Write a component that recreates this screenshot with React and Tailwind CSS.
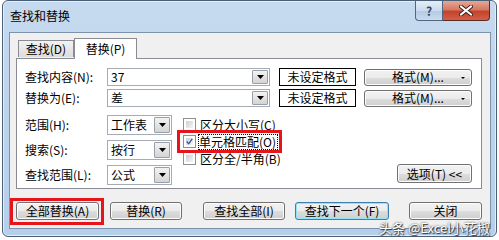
import React from "react";

function Arrow() {
  return (
    <svg width="7" height="4" viewBox="0 0 7 4">
      <path d="M0 0h7L3.5 4z" fill="#000" />
    </svg>
  );
}

function DropBtn() {
  return (
    <div className="w-[16px] h-full border border-[#9aa0a8] rounded-[1px] bg-gradient-to-b from-[#f3f3f3] to-[#d4d4d4] flex items-center justify-center shrink-0">
      <Arrow />
    </div>
  );
}

function Combo({ value, w, h }) {
  return (
    <div className={`${w} ${h} border border-[#a5acb5] bg-white flex items-stretch p-[1px]`}>
      <div className="flex-1 pl-[2px] flex items-center leading-none">{value}</div>
      <DropBtn />
    </div>
  );
}

function Btn({ children, className = "", def = false }) {
  return (
    <div
      className={`${className} rounded-[3px] border ${
        def ? "border-[#3c7fb1] shadow-[inset_0_0_0_1px_#8fe4f8]" : "border-[#707070] shadow-[inset_0_0_0_1px_#fcfcfc]"
      } bg-[linear-gradient(#f2f2f2_0%,#ebebeb_50%,#dddddd_51%,#cfcfcf_100%)] flex items-center justify-center leading-none`}
    >
      {children}
    </div>
  );
}

function Check({ checked }) {
  return (
    <div className="w-[13px] h-[13px] border border-[#8e8f8f] bg-white p-[2px] shrink-0">
      <div className="w-full h-full bg-gradient-to-br from-[#cbcfd5] to-[#f6f6f6] flex items-center justify-center">
        {checked && (
          <svg width="9" height="9" viewBox="0 0 9 9">
            <path d="M1 4.5L3.5 7.5L8 1" stroke="#2b4fa3" strokeWidth="1.6" fill="none" />
          </svg>
        )}
      </div>
    </div>
  );
}

export default function App() {
  return (
    <div className="w-[499px] h-[240px] bg-white overflow-hidden pl-[2px] relative font-['Noto_Sans_CJK_SC','Liberation_Sans',sans-serif] text-[12px] text-black">
      <div className="w-[495px] h-[237px] rounded-[6px] border border-[#4a6078] bg-gradient-to-b from-[#c6daef] via-[#bcd3ec] to-[#b6cfe9] flex flex-col shadow-[inset_0_0_0_1px_#e4eef9]">
        {/* title bar */}
        <div className="h-[31px] flex items-start shrink-0">
          <div className="flex-1 pl-[7px] pt-[9px] leading-none text-[12px]">查找和替换</div>
          <div className="flex mr-[6px]">
            <div className="w-[28px] h-[20px] border border-[#50677f] border-t-0 rounded-bl-[4px] bg-[linear-gradient(#e4eef9_0%,#cadcef_50%,#b2c9e2_51%,#c9dcf0_100%)] flex items-center justify-center text-[#33475f] text-[12px] leading-none font-bold">
              ?
            </div>
            <div className="w-[47px] h-[20px] border border-[#5b2b22] border-t-0 border-l-0 rounded-br-[4px] bg-[linear-gradient(#e6a795_0%,#d47a63_45%,#c4432a_55%,#d2604a_100%)] flex items-center justify-center">
              <svg width="14" height="11" viewBox="0 0 14 11">
                <path d="M2 1.5L12 9.5M12 1.5L2 9.5" stroke="#3d1f1a" strokeWidth="4" strokeLinecap="square" />
                <path d="M2 1.5L12 9.5M12 1.5L2 9.5" stroke="#ffffff" strokeWidth="2" strokeLinecap="square" />
              </svg>
            </div>
          </div>
        </div>
        {/* client */}
        <div className="ml-[6px] mr-[5px] mb-[7px] flex-1 border border-[#7d93ad] bg-[#f0f0f0] flex flex-col">
          {/* tabs */}
          <div className="ml-[8px] mt-[5px] flex items-end h-[20px] relative z-10">
            <div className="w-[56px] h-[17px] border border-[#898c95] border-b-0 bg-gradient-to-b from-[#f2f2f2] to-[#dcdcdc] flex items-center justify-center leading-none mb-[1px]">
              查找(D)
            </div>
            <div className="w-[63px] h-[21px] border border-[#898c95] border-b-0 bg-white flex items-center justify-center leading-none -mb-[1px]">
              替换(P)
            </div>
          </div>
          {/* panel */}
          <div className="ml-[6px] mr-[8px] border border-[#898c95] bg-white pt-[9px] pl-[8px] pr-[9px] pb-[4px] flex flex-col">
            <div className="flex items-center h-[18px]">
              <div className="w-[82px] leading-none">查找内容(N):</div>
              <Combo value="37" w="w-[163px]" h="h-[18px]" />
              <div className="ml-[9px] w-[77px] h-[18px] border border-black flex items-center justify-center leading-none">
                未设定格式
              </div>
              <Btn className="ml-[8px] w-[108px] h-[17px] relative">
                格式(M)...
                <span className="absolute right-[6px] top-[7px] w-0 h-0 border-l-[2px] border-r-[2px] border-t-[2px] border-l-transparent border-r-transparent border-t-black" />
              </Btn>
            </div>
            <div className="flex items-center h-[18px] mt-[3px]">
              <div className="w-[82px] leading-none">替换为(E):</div>
              <Combo value="差" w="w-[163px]" h="h-[18px]" />
              <div className="ml-[9px] w-[77px] h-[18px] border border-black flex items-center justify-center leading-none">
                未设定格式
              </div>
              <Btn className="ml-[8px] w-[108px] h-[17px] relative">
                格式(M)...
                <span className="absolute right-[6px] top-[7px] w-0 h-0 border-l-[2px] border-r-[2px] border-t-[2px] border-l-transparent border-r-transparent border-t-black" />
              </Btn>
            </div>
            <div className="flex mt-[8px] h-[69px]">
              <div className="flex flex-col gap-[5px]">
                <div className="flex items-center h-[20px]">
                  <div className="w-[82px] leading-none">范围(H):</div>
                  <Combo value="工作表" w="w-[65px]" h="h-[20px]" />
                </div>
                <div className="flex items-center h-[20px]">
                  <div className="w-[82px] leading-none">搜索(S):</div>
                  <Combo value="按行" w="w-[65px]" h="h-[20px]" />
                </div>
                <div className="flex items-center h-[20px]">
                  <div className="w-[82px] leading-none">查找范围(L):</div>
                  <Combo value="公式" w="w-[65px]" h="h-[20px]" />
                </div>
              </div>
              <div className="ml-[11px] pt-[1px] flex flex-col items-start">
                <div className="flex items-center h-[17px] gap-[4px]">
                  <Check />
                  <span className="leading-none whitespace-nowrap">区分大小写(C)</span>
                </div>
                <div className="flex items-center h-[17px] gap-[2px] relative">
                  <Check checked />
                  <span className="leading-none whitespace-nowrap border border-dotted border-black py-[1px] pr-[1px]">单元格匹配(O)</span>
                  <div className="absolute -left-[6px] -top-[3px] -bottom-[3px] -right-[4px] border-[3px] border-[#e8141c]" />
                </div>
                <div className="flex items-center h-[17px] gap-[4px]">
                  <Check />
                  <span className="leading-none whitespace-nowrap">区分全/半角(B)</span>
                </div>
              </div>
              <div className="flex-1" />
              <Btn className="self-end w-[75px] h-[19px] mb-[1px]">选项(T) &lt;&lt;</Btn>
            </div>
          </div>
          {/* bottom buttons */}
          <div className="flex mt-[13px] ml-[6px] h-[18px]">
            <div className="relative">
              <Btn className="w-[83px] h-[18px]">全部替换(A)</Btn>
              <div className="absolute -left-[6px] -right-[5px] -top-[4px] -bottom-[5px] border-[3px] border-[#e8141c]" />
            </div>
            <Btn className="ml-[11px] w-[72px] h-[18px]">替换(R)</Btn>
            <Btn className="ml-[21px] w-[82px] h-[18px]">查找全部(I)</Btn>
            <Btn def className="ml-[10px] w-[94px] h-[18px]">查找下一个(F)</Btn>
            <Btn className="ml-[20px] w-[73px] h-[18px]">关闭</Btn>
          </div>
        </div>
      </div>
      <div className="absolute left-[379px] top-[221px] text-[13px] leading-none text-white [text-shadow:0_0_2px_#333,1px_1px_1px_#333]">
        头条 @Excel小花椒
      </div>
    </div>
  );
}
